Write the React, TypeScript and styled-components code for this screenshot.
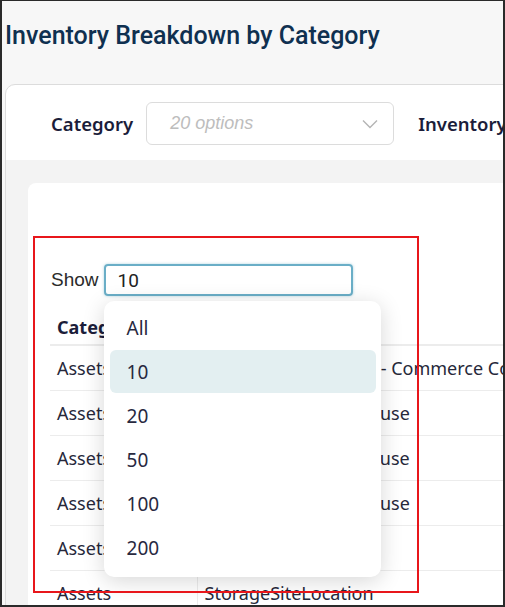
import React from "react";
import styled, { createGlobalStyle } from "styled-components";

const GlobalStyle = createGlobalStyle`
  html, body {
    margin: 0;
    padding: 0;
    background: #ffffff;
  }
  * {
    box-sizing: border-box;
  }
`;

const Frame = styled.div`
  width: 505px;
  height: 607px;
  overflow: hidden;
  background: #f7f7f7;
  border: 2px solid #2a2a2a;
  border-top-width: 1px;
  font-family: "Noto Sans", "Open Sans", sans-serif;
`;

const Title = styled.h1`
  margin: 0;
  padding: 21px 0 0 3px;
  font-family: Roboto, "Noto Sans", sans-serif;
  font-size: 25px;
  line-height: 28px;
  font-weight: 500;
  color: #0f3050;
  white-space: nowrap;
`;

const Card = styled.section`
  margin: 34px -40px 0 3px;
  background: #ffffff;
  border: 1px solid #dcdcdc;
  border-radius: 10px 10px 0 0;
`;

const FilterBar = styled.div`
  display: flex;
  align-items: center;
  height: 75px;
  padding: 2px 0 0 45px;
  white-space: nowrap;
`;

const FilterLabel = styled.span`
  font-size: 18.5px;
  font-weight: 600;
  color: #1b1d3a;
`;

const SelectBox = styled.div`
  display: flex;
  align-items: center;
  justify-content: space-between;
  width: 248px;
  height: 43px;
  margin: 0 24px 0 13px;
  padding: 0 15px 0 23px;
  border: 1px solid #dcdcdc;
  border-radius: 6px;
  font-family: "Liberation Sans", Arial, sans-serif;
  font-size: 18px;
  font-style: italic;
  color: #bdbdbd;
`;

const Content = styled.div`
  background: #f3f3f3;
  padding: 23px 0 0 22px;
  height: 460px;
`;

const Panel = styled.div`
  position: relative;
  background: #ffffff;
  border-radius: 8px 8px 0 0;
  height: 100%;
  padding: 81px 0 0 22px;
`;

const Annotation = styled.div`
  position: absolute;
  left: 5px;
  top: 53px;
  width: 386px;
  height: 357px;
  border: 2px solid #e8161b;
  pointer-events: none;
  z-index: 3;
`;

const ShowRow = styled.div`
  display: flex;
  align-items: center;
  gap: 5px;
  height: 32px;
  margin-left: 1px;
`;

const ShowLabel = styled.label`
  font-family: "Liberation Sans", Arial, sans-serif;
  font-size: 19px;
  color: #2b2b2b;
`;

const PickerWrap = styled.div`
  position: relative;
`;

const PageInput = styled.div`
  width: 249px;
  height: 32px;
  display: flex;
  align-items: center;
  padding-left: 12px;
  border: 2px solid #6aaec7;
  border-radius: 4px;
  box-shadow: 0 0 3px rgba(106, 174, 199, 0.55);
  font-family: Roboto, sans-serif;
  font-size: 19px;
  color: #222;
`;

const Menu = styled.ul`
  position: absolute;
  top: 37px;
  left: 0;
  width: 277px;
  margin: 0;
  padding: 5px 5px 8px 6px;
  list-style: none;
  display: flex;
  flex-direction: column;
  gap: 1px;
  background: #ffffff;
  border-radius: 10px;
  box-shadow: 0 4px 22px rgba(0, 0, 0, 0.16);
  z-index: 2;
`;

const MenuItem = styled.li<{ $active?: boolean }>`
  height: 43px;
  display: flex;
  align-items: center;
  padding-left: 17px;
  border-radius: 6px;
  font-size: 19px;
  color: #28293f;
  background: ${(p) => (p.$active ? "#e3eff1" : "transparent")};
`;

const Table = styled.table`
  margin-top: 4px;
  border-collapse: collapse;
  width: 560px;
  font-size: 18px;
  color: #26283a;
  white-space: nowrap;
`;

const HeadCell = styled.th`
  height: 45px;
  padding: 10px 7px 0;
  text-align: left;
  font-weight: 700;
  color: #1b1d3a;
  border-bottom: 2px solid #ececec;
`;

const Cell = styled.td<{ $first?: boolean }>`
  height: 45px;
  padding: 0 7px;
  border-bottom: 1px solid #ececec;
  border-right: ${(p) => (p.$first ? "1px solid #ececec" : "none")};
  width: ${(p) => (p.$first ? "147px" : "auto")};
`;

const Chevron = () => (
  <svg width="16" height="10" viewBox="0 0 16 10" fill="none">
    <path d="M1 1.5 L8 8.5 L15 1.5" stroke="#b4b4b4" strokeWidth="1.4" />
  </svg>
);

const rows = [
  ["Assets", "Fulfilment Centre 01 - Commerce Corp"],
  ["Assets", "Northbridge Warehouse"],
  ["Assets", "Southbridge Warehouse"],
  ["Assets", "Northbridge Warehouse"],
  ["Assets", "StorageSiteLocation"],
  ["Assets", "StorageSiteLocation"],
];

const pageSizes = ["All", "10", "20", "50", "100", "200"];

export default function App() {
  return (
    <Frame>
      <GlobalStyle />
      <Title>Inventory Breakdown by Category</Title>
      <Card>
        <FilterBar>
          <FilterLabel>Category</FilterLabel>
          <SelectBox>
            20 options
            <Chevron />
          </SelectBox>
          <FilterLabel>Inventory</FilterLabel>
        </FilterBar>
        <Content>
          <Panel>
            <Annotation />
            <ShowRow>
              <ShowLabel>Show</ShowLabel>
              <PickerWrap>
                <PageInput>10</PageInput>
                <Menu>
                  {pageSizes.map((size) => (
                    <MenuItem key={size} $active={size === "10"}>
                      {size}
                    </MenuItem>
                  ))}
                </Menu>
              </PickerWrap>
            </ShowRow>
            <Table>
              <thead>
                <tr>
                  <HeadCell>Category</HeadCell>
                  <HeadCell>Location</HeadCell>
                </tr>
              </thead>
              <tbody>
                {rows.map(([cat, loc], i) => (
                  <tr key={i}>
                    <Cell $first>{cat}</Cell>
                    <Cell>{loc}</Cell>
                  </tr>
                ))}
              </tbody>
            </Table>
          </Panel>
        </Content>
      </Card>
    </Frame>
  );
}
